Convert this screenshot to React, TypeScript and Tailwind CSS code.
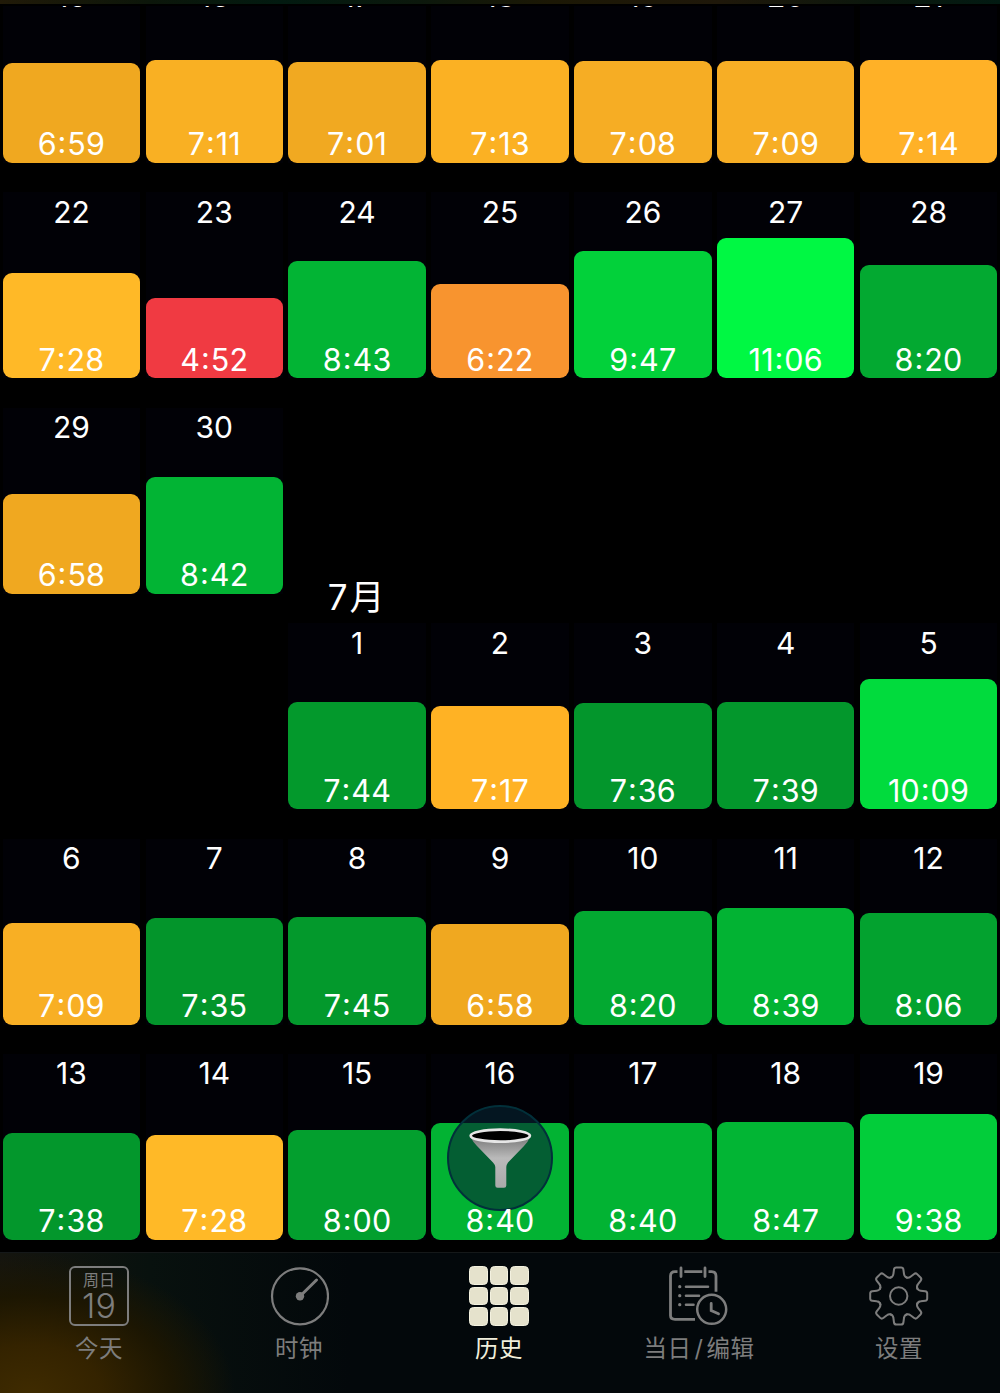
import type { ReactNode } from 'react';
import clsx from 'clsx';

interface Day {
  date: number;
  time: string;
  height: number;
  color: string;
  month?: string;
}

const day = (date: number, time: string, height: number, color: string, month?: string): Day => ({
  date,
  time,
  height,
  color,
  month,
});

const WEEKS: (Day | null)[][] = [
  [
    day(15, '6:59', 100.4, '#f0a820'),
    day(16, '7:11', 102.6, '#f9b023'),
    day(17, '7:01', 101, '#f1a921'),
    day(18, '7:13', 102.9, '#fbb123'),
    day(19, '7:08', 101.7, '#f6ad24'),
    day(20, '7:09', 101.9, '#f7ae25'),
    day(21, '7:14', 102.9, '#ffb127'),
  ],
  [
    day(22, '7:28', 105, '#ffb927'),
    day(23, '4:52', 80, '#f03a42'),
    day(24, '8:43', 117, '#02b434'),
    day(25, '6:22', 94.5, '#f8942f'),
    day(26, '9:47', 127.2, '#02d13a'),
    day(27, '11:06', 140, '#00f843'),
    day(28, '8:20', 113.4, '#03a931'),
  ],
  [
    day(29, '6:58', 100.3, '#f0a820'),
    day(30, '8:42', 117, '#02b434'),
    null,
    null,
    null,
    null,
    null,
  ],
  [
    null,
    null,
    day(1, '7:44', 107.6, '#03992c', '7月'),
    day(2, '7:17', 103, '#ffb224'),
    day(3, '7:36', 106.2, '#03962c'),
    day(4, '7:39', 106.9, '#03972c'),
    day(5, '10:09', 130.7, '#01db3d'),
  ],
  [
    day(6, '7:09', 102, '#f8af24'),
    day(7, '7:35', 106.2, '#03952b'),
    day(8, '7:45', 107.8, '#03992c'),
    day(9, '6:58', 100.2, '#f0a820'),
    day(10, '8:20', 113.6, '#03a931'),
    day(11, '8:39', 116.2, '#02b333'),
    day(12, '8:06', 111.4, '#03a22f'),
  ],
  [
    day(13, '7:38', 107, '#03972c'),
    day(14, '7:28', 105.3, '#ffb927'),
    day(15, '8:00', 110.2, '#039f2e'),
    day(16, '8:40', 116.8, '#02b333'),
    day(17, '8:40', 116.8, '#02b333'),
    day(18, '8:47', 118, '#02b534'),
    day(19, '9:38', 126, '#02cd3a'),
  ],
];

function Duration({ value }: { value: string }) {
  const [hours, minutes] = value.split(':');
  return (
    <span className="relative z-20 [font-feature-settings:'calt'_0]">
      {hours}
      <span className="relative -top-[2px] mx-[0.8px]">:</span>
      {minutes}
    </span>
  );
}

function DayCell({ item }: { item: Day | null }) {
  if (!item) return <div className="h-[186px]" />;

  return (
    <div className="relative flex h-[186px] flex-col justify-between bg-[#010106]">
      {item.month && (
        <span className="absolute bottom-full left-0 mb-[6px] w-full text-center text-[35px] leading-[40px] tracking-[2px]">
          {item.month}
        </span>
      )}
      <span className="pt-[4.4px] text-center text-[30px] leading-[30px]">{item.date}</span>
      <div
        className="flex items-end justify-center rounded-[9px] pb-[3.6px] text-[30.5px] leading-[30px] tracking-[0.2px]"
        style={{ height: item.height, backgroundColor: item.color }}
      >
        <Duration value={item.time} />
      </div>
    </div>
  );
}

function FilterButton() {
  return (
    <button
      aria-label="筛选"
      className="absolute bottom-[41px] left-[447px] z-10 flex size-[106px] items-center justify-center rounded-full border-2 border-[#02303a] bg-[#062434]/60"
    >
      <svg width="64" height="62" viewBox="0 0 64 62" fill="none">
        <defs>
          <linearGradient id="cone" x1="0" y1="12" x2="0" y2="60" gradientUnits="userSpaceOnUse">
            <stop offset="0" stopColor="#808080" />
            <stop offset="0.4" stopColor="#bababa" />
            <stop offset="1" stopColor="#aaaaaa" />
          </linearGradient>
        </defs>
        <path
          d="M2.500 10 Q5 15 9 19 L25 35.500 Q27.300 38 27.300 40 V58.500 Q27.300 60.700 29.500 60.700 H36 Q38.300 60.700 38.300 58.500 V40 Q38.300 38 40 35.500 L56 19 Q60 15 62 10 Z"
          fill="url(#cone)"
        />
        <ellipse cx="32.300" cy="8.700" rx="29.600" ry="6" fill="#000" stroke="#e6e6e6" strokeWidth="2.700" />
      </svg>
    </button>
  );
}

function TodayIcon() {
  return (
    <div className="flex size-[60px] flex-col items-center rounded-[6px] border-2 border-[#7d7d7d] pt-[3px]">
      <span className="text-[16px] leading-[18px]">周日</span>
      <span className="mt-[1px] text-[34px] leading-[32px] font-light">19</span>
    </div>
  );
}

function ClockIcon() {
  return (
    <svg width="60" height="60" viewBox="0 0 60 60" fill="none" stroke="currentColor">
      <circle cx="31" cy="30.300" r="28" strokeWidth="2.200" />
      <circle cx="31" cy="30.300" r="4.200" fill="currentColor" stroke="none" />
      <path d="M31 30.300 47.500 14" strokeWidth="3" strokeLinecap="round" />
    </svg>
  );
}

function GridIcon() {
  return (
    <div className="grid size-[60px] grid-cols-3 gap-[2px]">
      {Array.from({ length: 9 }, (_, i) => (
        <div key={i} className="rounded-[4.5px] border border-[#f3f1df] bg-[#e5e2cc]" />
      ))}
    </div>
  );
}

function ScheduleIcon() {
  return (
    <svg
      width="60"
      height="60"
      viewBox="0 0 60 60"
      fill="none"
      stroke="currentColor"
      strokeWidth="2.800"
      strokeLinecap="round"
    >
      <path d="M8.500 5.700H6Q1.500 5.700 1.500 10V49.500Q1.500 53.300 6 53.300H26" strokeLinecap="butt" />
      <path d="M15.300 5.700H33.300M39.500 5.700H42.500Q47 5.700 47 10V25.700" strokeLinecap="butt" />
      <path d="M12 2V10.500M36 2V10.500" />
      <path d="M17 20.700H39M17 29.700H30M17 38.700H24.500" strokeWidth="2.600" />
      <path d="M10.700 20.700H10.800M10.700 29.700H10.800M10.700 38.700H10.800" strokeWidth="3.200" />
      <circle cx="42.700" cy="43.300" r="14.500" strokeWidth="2.500" />
      <path d="M42.200 37.500V44.500L49.500 47.800" />
    </svg>
  );
}

const TOOTH =
  'M-8.300 -18.300 Q-5.600 -19.200 -5.300 -22 L-4.700 -26.500 Q-4.400 -28.500 -2.400 -28.500 H2.400 Q4.400 -28.500 4.700 -26.500 L5.300 -22 Q5.600 -19.200 8.300 -18.300';

function GearIcon() {
  return (
    <svg width="60" height="60" viewBox="0 0 60 60" fill="none" stroke="currentColor" strokeWidth="2">
      <g transform="translate(29.700 30)" strokeLinejoin="round" strokeLinecap="round">
        {[0, 45, 90, 135, 180, 225, 270, 315].map((angle) => (
          <path key={angle} d={TOOTH} transform={`rotate(${angle})`} />
        ))}
        <circle r="8.700" />
      </g>
    </svg>
  );
}

function Tab({ label, active, children }: { label: ReactNode; active?: boolean; children: ReactNode }) {
  return (
    <button
      className={clsx(
        'flex flex-col items-center pt-[13px] pr-[2px]',
        active ? 'text-[#f1efdc]' : 'text-[#7d7d7d]',
      )}
    >
      {children}
      <span className="mt-[7px] text-[23.5px] leading-[32px] tracking-[0.5px]">{label}</span>
    </button>
  );
}

export default function App() {
  return (
    <div className="relative flex h-[1393px] w-[1000px] flex-col overflow-hidden bg-black font-['Inter','Noto_Sans_CJK_SC',sans-serif] text-white">
      <div className="h-[4px] shrink-0 bg-[linear-gradient(to_right,#211a08_0%,#0c160a_15%,#021a10_28%,#0c180c_42%,#1c1805_55%,#1f180a_72%,#0b170d_88%,#021a12_100%)]" />
      <main className="relative mt-[2px] flex h-[1246px] shrink-0 flex-col justify-end gap-[29.4px] overflow-hidden pb-[12px]">
        {WEEKS.map((week, i) => (
          <div key={i} className="grid shrink-0 grid-cols-7 gap-[5.4px] px-[2.7px]">
            {week.map((item, j) => (
              <DayCell key={j} item={item} />
            ))}
          </div>
        ))}
        <FilterButton />
      </main>
      <nav className="grid grow grid-cols-5 border-t border-[#151819] bg-[#03080b] bg-[radial-gradient(ellipse_205px_140px_at_30px_141px,#3f2b00_0%,#342300_35%,#1c1602_70%,transparent_100%),linear-gradient(to_right,#15150f_0%,#08110e_15%,#03080b_35%)]">
        <Tab label="今天">
          <TodayIcon />
        </Tab>
        <Tab label="时钟">
          <ClockIcon />
        </Tab>
        <Tab label="历史" active>
          <GridIcon />
        </Tab>
        <Tab
          label={
            <>
              当日<span className="mx-[3px]">/</span>编辑
            </>
          }
        >
          <ScheduleIcon />
        </Tab>
        <Tab label="设置">
          <GearIcon />
        </Tab>
      </nav>
    </div>
  );
}
